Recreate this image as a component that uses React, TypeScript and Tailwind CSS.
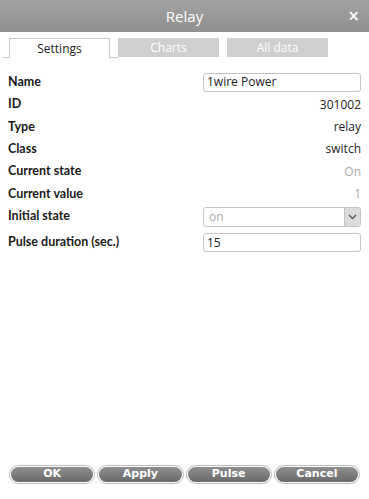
import React from "react";

const font = { fontFamily: '"Open Sans", "Noto Sans", sans-serif' };

function Row({ label, children, h = "h-[22.4px]" }: { label: string; children: React.ReactNode; h?: string }) {
  return (
    <div className={`flex items-center ${h}`}>
      <div className="w-[195px] text-[12.5px] font-bold text-[#1a1a1a]" style={{ fontFamily: 'Lato, "Open Sans", sans-serif' }}>{label}</div>
      <div className="flex-1 flex justify-end text-[12px]">{children}</div>
    </div>
  );
}

export default function App() {
  return (
    <div className="w-[369px] h-[499px] bg-white flex flex-col" style={font}>
      <div className="h-[32px] flex items-center justify-center relative bg-gradient-to-b from-[#a3a3a3] to-[#8f8f8f]">
        <span className="text-white text-[15px] font-medium">Relay</span>
        <span className="absolute right-[10px] top-[4px] text-white text-[19px] font-semibold leading-[24px]">×</span>
      </div>
      <div className="flex items-end h-[26px] pl-[3px] pt-[6px]">
        <div className="w-[6px] border-b border-[#c8c8c8] h-full" />
        <div className="w-[101px] h-full border border-b-0 border-[#c8c8c8] bg-white flex items-center justify-center text-[12px] text-[#222]">Settings</div>
        <div className="w-[8px] border-b border-[#c8c8c8] h-full" />
        <div className="w-[101px] h-[19px] self-start bg-[#cfcfcf] flex items-center justify-center text-[12px] text-white">Charts</div>
        <div className="w-[8px] h-full" />
        <div className="w-[101px] h-[19px] self-start bg-[#cfcfcf] flex items-center justify-center text-[12px] text-white">All data</div>
      </div>
      <div className="flex flex-col px-[8px] pt-[13px]">
        <Row label="Name">
          <div className="w-[158px] h-[19px] border border-[#c4c4c4] rounded-[3px] px-[3px] flex items-center text-[12px] text-[#222]">1wire Power</div>
        </Row>
        <Row label="ID"><span className="text-[#222]">301002</span></Row>
        <Row label="Type"><span className="text-[#222]">relay</span></Row>
        <Row label="Class"><span className="text-[#222]">switch</span></Row>
        <Row label="Current state"><span className="text-[#aaa]">On</span></Row>
        <Row label="Current value"><span className="text-[#aaa]">1</span></Row>
        <Row label="Initial state">
          <div className="w-[158px] h-[20px] border border-[#c4c4c4] rounded-[3px] flex items-center text-[12px] text-[#aaa] overflow-hidden">
            <span className="flex-1 px-[5px]">on</span>
            <div className="w-[16px] h-full bg-[#dcdcdc] border-l border-[#c4c4c4] flex items-center justify-center">
              <svg width="9" height="6" viewBox="0 0 9 6"><path d="M1 1 L4.5 4.5 L8 1" stroke="#555" strokeWidth="1.3" fill="none" /></svg>
            </div>
          </div>
        </Row>
        <Row label="Pulse duration (sec.)" h="h-[30px]">
          <div className="w-[158px] h-[19px] border border-[#c4c4c4] rounded-[3px] px-[3px] flex items-center text-[12px] text-[#222]">15</div>
        </Row>
      </div>
      <div className="flex-1" />
      <div className="flex gap-[2px] px-[9px] pb-[15px]">
        {["OK", "Apply", "Pulse", "Cancel"].map((t) => (
          <div
            key={t}
            className="flex-1 h-[19px] rounded-full border border-[#bbb] p-[1px] bg-white"
          >
            <div
              className="w-full h-full rounded-full bg-gradient-to-b from-[#8f8f8f] to-[#6a6a6a] flex items-center justify-center text-white text-[11px] font-bold"
              style={{ fontFamily: '"DejaVu Sans", Verdana, sans-serif' }}
            >
              {t}
            </div>
          </div>
        ))}
      </div>
    </div>
  );
}
